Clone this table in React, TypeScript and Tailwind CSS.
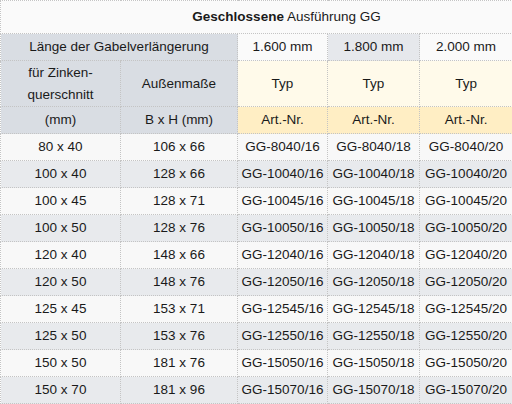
import React from "react";

const rows: [string, string, string][] = [
  ["80 x 40", "106 x 66", "8040"],
  ["100 x 40", "128 x 66", "10040"],
  ["100 x 45", "128 x 71", "10045"],
  ["100 x 50", "128 x 76", "10050"],
  ["120 x 40", "148 x 66", "12040"],
  ["120 x 50", "148 x 76", "12050"],
  ["125 x 45", "153 x 71", "12545"],
  ["125 x 50", "153 x 76", "12550"],
  ["150 x 50", "181 x 76", "15050"],
  ["150 x 70", "181 x 96", "15070"],
];

const cell = "border border-dotted border-[#c4c4c4] p-0 text-center align-middle";

export default function App() {
  return (
    <div className="w-[512px] h-[404px] overflow-hidden bg-white">
      <table
        className="w-[512px] table-fixed border-collapse text-[13.5px] leading-[16px] text-[#1a1a1a]"
        style={{ fontFamily: '"Liberation Sans", Arial, sans-serif' }}
      >
        <colgroup>
          <col className="w-[120px]" />
          <col className="w-[117px]" />
          <col className="w-[90px]" />
          <col className="w-[92px]" />
          <col className="w-[93px]" />
        </colgroup>
        <tbody>
          <tr className="h-[33px] bg-[#fafafa]">
            <td colSpan={5} className={cell + " pl-[60px]"}>
              <b>Geschlossene</b> Ausführung GG
            </td>
          </tr>
          <tr className="h-[27px]">
            <td colSpan={2} className={cell + " bg-[#d9dde3]"}>
              Länge der Gabelverlängerung
            </td>
            <td className={cell + " bg-[#fafafa]"}>1.600 mm</td>
            <td className={cell + " bg-[#e6e8ec]"}>1.800 mm</td>
            <td className={cell + " bg-[#fafafa]"}>2.000 mm</td>
          </tr>
          <tr className="h-[46px]">
            <td className={cell + " bg-[#d9dde3] leading-[22px]"}>
              für Zinken-
              <br />
              querschnitt
            </td>
            <td className={cell + " bg-[#d9dde3]"}>Außenmaße</td>
            <td className={cell + " bg-[#fffaea]"}>Typ</td>
            <td className={cell + " bg-[#fffaea]"}>Typ</td>
            <td className={cell + " bg-[#fffaea]"}>Typ</td>
          </tr>
          <tr className="h-[27px]">
            <td className={cell + " bg-[#d9dde3]"}>(mm)</td>
            <td className={cell + " bg-[#d9dde3]"}>B x H (mm)</td>
            <td className={cell + " bg-[#ffeec4]"}>Art.-Nr.</td>
            <td className={cell + " bg-[#ffeec4]"}>Art.-Nr.</td>
            <td className={cell + " bg-[#ffeec4]"}>Art.-Nr.</td>
          </tr>
          {rows.map(([a, b, code], i) => (
            <tr key={code} className={"h-[27px] " + (i % 2 === 0 ? "bg-[#f8f8f8]" : "bg-[#e8eaed]")}>
              <td className={cell}>{a}</td>
              <td className={cell}>{b}</td>
              <td className={cell}>GG-{code}/16</td>
              <td className={cell}>GG-{code}/18</td>
              <td className={cell}>GG-{code}/20</td>
            </tr>
          ))}
        </tbody>
      </table>
    </div>
  );
}
